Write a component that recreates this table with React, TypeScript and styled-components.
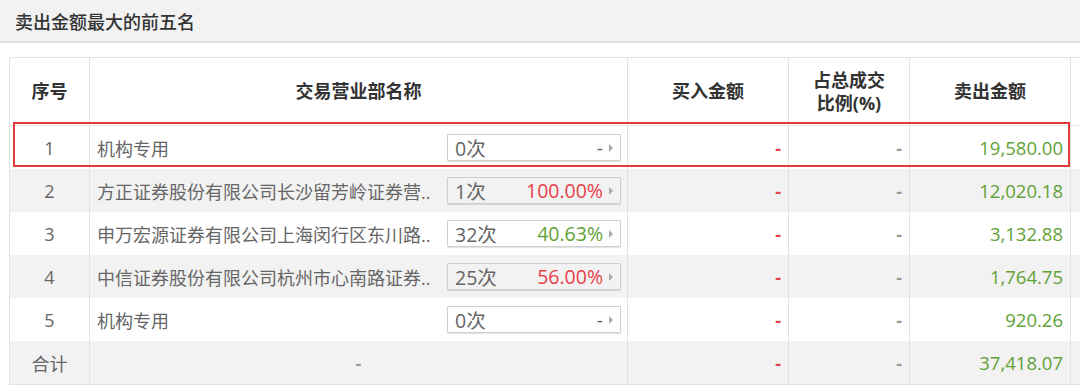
import React from 'react';
import styled, { createGlobalStyle } from 'styled-components';

const GlobalStyle = createGlobalStyle`
  html, body {
    margin: 0;
    padding: 0;
    background: #fff;
    overflow: hidden;
  }
  body {
    font-family: "Open Sans", "Noto Sans CJK SC", sans-serif;
    color: #666;
  }
`;

const COLS = '80px 538px 161px 121px 161px 200px';

const Page = styled.div`
  width: 1080px;
  height: 392px;
  overflow: hidden;
`;

const TitleBar = styled.div`
  height: 41px;
  background: #f2f2f2;
  border-bottom: 2px solid #e2e2e2;
  display: flex;
  align-items: center;
  padding-left: 15px;
  font-size: 18px;
  font-weight: 500;
  color: #333;
`;

const TableWrap = styled.div`
  position: relative;
  margin: 14px 0 0 9px;
  width: 1300px;
  border-top: 1px solid #e3e3e3;
  border-left: 1px solid #e3e3e3;
  border-bottom: 1px solid #e3e3e3;
`;

const Row = styled.div<{ $alt?: boolean; $head?: boolean }>`
  display: grid;
  grid-template-columns: ${COLS};
  height: ${(p) => (p.$head ? '67px' : '43px')};
  background: ${(p) => (p.$alt ? '#f2f2f2' : '#fff')};
  border-bottom: ${(p) => (p.$head ? '1px solid #e8e8e8' : 'none')};
`;

const Cell = styled.div<{ $align?: 'left' | 'center' | 'right' }>`
  box-sizing: border-box;
  border-right: 1px solid #e3e3e3;
  display: flex;
  align-items: center;
  justify-content: ${(p) =>
    p.$align === 'left' ? 'flex-start' : p.$align === 'right' ? 'flex-end' : 'center'};
  padding: 0 7px;
  font-size: 18px;
  color: #666;
  white-space: nowrap;
  overflow: hidden;
`;

const HeadCell = styled(Cell)`
  font-weight: 700;
  color: #333;
  font-size: 18px;
  line-height: 23px;
  text-align: center;
  white-space: normal;
`;

const NameCell = styled(Cell)`
  justify-content: space-between;
  padding: 0 6px 0 7px;
`;

const Name = styled.span`
  white-space: nowrap;
`;

const Pill = styled.div`
  flex: none;
  box-sizing: border-box;
  width: 174px;
  height: 27px;
  border: 1px solid #cfcfcf;
  box-shadow: 0 1px 1px rgba(0, 0, 0, 0.12);
  border-radius: 1px;
  display: flex;
  align-items: center;
  padding: 0 7px 0 7px;
  font-size: 19.5px;
  color: #666;
`;

const Times = styled.span`
  flex: 1;
`;

const Pct = styled.span<{ $tone: 'red' | 'green' | 'gray' }>`
  color: ${(p) => (p.$tone === 'red' ? '#e8404a' : p.$tone === 'green' ? '#62a136' : '#666')};
`;

const Arrow = styled.span`
  margin-left: 6px;
  width: 0;
  height: 0;
  border-top: 4px solid transparent;
  border-bottom: 4px solid transparent;
  border-left: 4px solid #aaa;
`;

const Dash = styled.span<{ $red?: boolean }>`
  font-weight: 700;
  color: ${(p) => (p.$red ? '#e8404a' : '#999')};
`;

const Amount = styled.span`
  color: #62a136;
  font-size: 18.5px;
`;

const Highlight = styled.div`
  position: absolute;
  left: 3px;
  top: 64px;
  width: 1057px;
  height: 45px;
  box-sizing: border-box;
  border: 2px solid #e23b3b;
  pointer-events: none;
`;

type Item = {
  no: string;
  name: string;
  times: string;
  pct: string;
  tone: 'red' | 'green' | 'gray';
  sell: string;
};

const rows: Item[] = [
  { no: '1', name: '机构专用', times: '0次', pct: '-', tone: 'gray', sell: '19,580.00' },
  { no: '2', name: '方正证券股份有限公司长沙留芳岭证券营..', times: '1次', pct: '100.00%', tone: 'red', sell: '12,020.18' },
  { no: '3', name: '申万宏源证券有限公司上海闵行区东川路..', times: '32次', pct: '40.63%', tone: 'green', sell: '3,132.88' },
  { no: '4', name: '中信证券股份有限公司杭州市心南路证券..', times: '25次', pct: '56.00%', tone: 'red', sell: '1,764.75' },
  { no: '5', name: '机构专用', times: '0次', pct: '-', tone: 'gray', sell: '920.26' },
];

export default function App() {
  return (
    <Page>
      <GlobalStyle />
      <TitleBar>卖出金额最大的前五名</TitleBar>
      <TableWrap>
        <Row $head>
          <HeadCell>序号</HeadCell>
          <HeadCell>交易营业部名称</HeadCell>
          <HeadCell>买入金额</HeadCell>
          <HeadCell>
            占总成交
            <br />
            比例(%)
          </HeadCell>
          <HeadCell>卖出金额</HeadCell>
          <HeadCell />
        </Row>
        {rows.map((r, i) => (
          <Row key={r.no} $alt={i % 2 === 1}>
            <Cell>{r.no}</Cell>
            <NameCell>
              <Name>{r.name}</Name>
              <Pill>
                <Times>{r.times}</Times>
                <Pct $tone={r.tone}>{r.pct}</Pct>
                <Arrow />
              </Pill>
            </NameCell>
            <Cell $align="right">
              <Dash $red>-</Dash>
            </Cell>
            <Cell $align="right">
              <Dash>-</Dash>
            </Cell>
            <Cell $align="right">
              <Amount>{r.sell}</Amount>
            </Cell>
            <Cell />
          </Row>
        ))}
        <Row $alt>
          <Cell>合计</Cell>
          <Cell>
            <Dash>-</Dash>
          </Cell>
          <Cell $align="right">
            <Dash $red>-</Dash>
          </Cell>
          <Cell $align="right">
            <Dash>-</Dash>
          </Cell>
          <Cell $align="right">
            <Amount>37,418.07</Amount>
          </Cell>
          <Cell />
        </Row>
        <Highlight />
      </TableWrap>
    </Page>
  );
}
